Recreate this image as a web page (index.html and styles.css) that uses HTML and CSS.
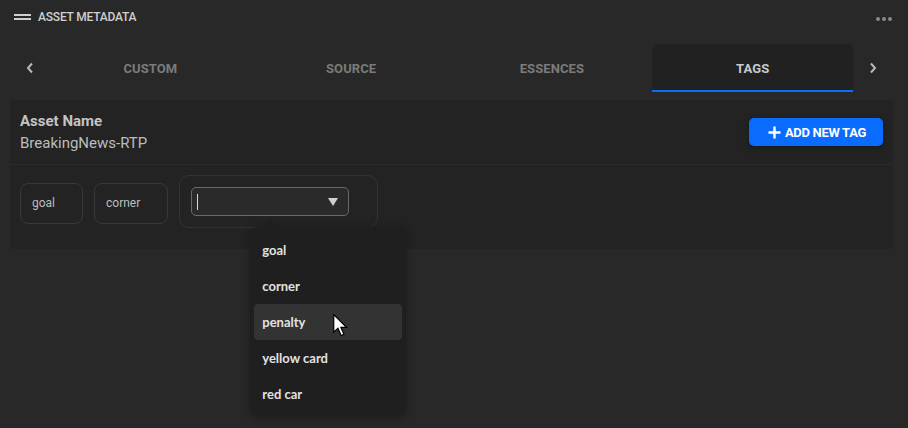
FILE: index.html
```html
<!DOCTYPE html>
<html lang="en">
<head>
    <meta charset="UTF-8">
    <meta name="viewport" content="width=device-width, initial-scale=1.0">
    <title>Asset Metadata</title>
    <link rel="stylesheet" href="styles.css">
</head>
<body>
    <div class="panel-header">
        <div class="panel-title">
            <span class="burger"><i></i><i></i></span>
            <span>Asset Metadata</span>
        </div>
        <div class="dots"><i></i><i></i><i></i></div>
    </div>

    <div class="tabs">
        <button class="tab-arrow">
            <svg width="10" height="12" viewBox="0 0 10 12"><polyline points="7,1.5 3,6 7,10.5" fill="none" stroke="#b8b8b8" stroke-width="2"/></svg>
        </button>
        <div class="tab-list">
            <div class="tab">Custom</div>
            <div class="tab">Source</div>
            <div class="tab">Essences</div>
            <div class="tab active">Tags</div>
        </div>
        <button class="tab-arrow">
            <svg width="10" height="12" viewBox="0 0 10 12"><polyline points="3,1.5 7,6 3,10.5" fill="none" stroke="#b8b8b8" stroke-width="2"/></svg>
        </button>
    </div>

    <div class="card">
        <div class="card-head">
            <div>
                <div class="asset-label">Asset Name</div>
                <div class="asset-value">BreakingNews-RTP</div>
            </div>
            <button class="add-btn">
                <svg width="13" height="13" viewBox="0 0 13 13"><path d="M6.5 0.5v12M0.5 6.5h12" stroke="#fff" stroke-width="2.4"/></svg>
                Add new tag
            </button>
        </div>

        <div class="tag-row">
            <div class="chip">goal</div>
            <div class="chip">corner</div>
            <div class="chip-input">
                <div class="select-box">
                    <span class="caret"></span>
                    <span class="triangle"></span>
                </div>
                <div class="menu">
                    <div class="menu-item">goal</div>
                    <div class="menu-item">corner</div>
                    <div class="menu-item hover">penalty</div>
                    <div class="menu-item">yellow card</div>
                    <div class="menu-item">red car</div>
                </div>
                <svg class="cursor" width="16" height="23" viewBox="0 0 13 19">
                    <path d="M0.5 0.5 L0.5 15 L4 11.8 L6.6 17.8 L8.9 16.8 L6.4 11 L11 11 Z" fill="#fff" stroke="#000" stroke-width="1"/>
                </svg>
            </div>
        </div>
    </div>
</body>
</html>
```

FILE: styles.css
```css
body {
    margin: 0;
    background-color: #282828;
    font-family: Roboto, "Liberation Sans", sans-serif;
    color: #cfcfcf;
    height: 428px;
    overflow: hidden;
}

.panel-header {
    height: 34px;
    padding: 0 16px 0 14px;
    display: flex;
    align-items: center;
    justify-content: space-between;
}

.panel-title {
    display: flex;
    align-items: center;
    gap: 7px;
    font-size: 12px;
    font-weight: 500;
    text-transform: uppercase;
    letter-spacing: -0.2px;
    color: #d0d0d0;
}

.burger {
    display: flex;
    flex-direction: column;
    gap: 2px;
}

.burger i {
    display: block;
    width: 17px;
    height: 2px;
    background: #cfcfcf;
}

.dots {
    display: flex;
    gap: 2px;
    margin-top: 4px;
}

.dots i {
    display: block;
    width: 4px;
    height: 4px;
    border-radius: 50%;
    background: #8a8a8a;
}

.tabs {
    display: flex;
    margin-top: 10px;
    padding: 0 15px 0 10px;
    height: 48px;
}

.tab-arrow {
    width: 40px;
    background: none;
    border: none;
    padding: 0;
    display: flex;
    align-items: center;
    justify-content: center;
}

.tab-list {
    flex: 1;
    display: grid;
    grid-template-columns: repeat(4, 1fr);
}

.tab {
    display: flex;
    align-items: center;
    justify-content: center;
    font-size: 13px;
    font-weight: 700;
    text-transform: uppercase;
    color: #7b7b7b;
    letter-spacing: 0.1px;
    border-radius: 6px 6px 0 0;
}

.tab.active {
    background: #212121;
    color: #c9c9c9;
    box-shadow: inset 0 -2px 0 #0a6cff;
}

.card {
    margin: 8px 15px 0 10px;
    background: #232323;
    border-radius: 4px;
}

.card-head {
    display: flex;
    align-items: center;
    justify-content: space-between;
    padding: 11px 10px 11px 10px;
    border-bottom: 1px solid #2b2b2b;
}

.asset-label {
    font-size: 15px;
    font-weight: 700;
    line-height: 20px;
    color: #c4c4c4;
}

.asset-value {
    font-size: 15px;
    line-height: 20px;
    margin-top: 2px;
    color: #bdbdbd;
}

.add-btn {
    display: flex;
    align-items: center;
    gap: 4px;
    height: 28px;
    width: 134px;
    justify-content: center;
    background: #0a6cff;
    color: #fff;
    border: none;
    border-radius: 5px;
    font-family: Roboto, "Liberation Sans", sans-serif;
    font-size: 13px;
    font-weight: 700;
    text-transform: uppercase;
    letter-spacing: -0.3px;
    box-shadow: 0 2px 6px rgba(0, 0, 0, 0.3);
    padding: 0 0 0 2px;
}

.tag-row {
    display: flex;
    align-items: center;
    gap: 11px;
    padding: 10px 10px 21px;
}

.chip {
    height: 39px;
    padding: 0 27px 0 11px;
    display: flex;
    align-items: center;
    border: 1px solid #383838;
    border-radius: 8px;
    font-size: 12px;
    color: #bdbdbd;
    margin-top: 3px;
}

.chip-input {
    position: relative;
    padding: 11px 28px 11px 11px;
    border: 1px solid #333;
    border-radius: 10px;
}

.select-box {
    height: 27px;
    border: 1px solid #6a6a6a;
    border-radius: 5px;
    background: #2a2a2a;
    display: flex;
    align-items: center;
    justify-content: space-between;
    padding: 0 10px 0 5px;
    width: 141px;
}

.caret {
    width: 1px;
    height: 16px;
    background: #d8d8d8;
}

.triangle {
    width: 0;
    height: 0;
    border-left: 5px solid transparent;
    border-right: 5px solid transparent;
    border-top: 8px solid #cfcfcf;
}

.menu {
    position: absolute;
    left: 70px;
    top: 51px;
    width: 148px;
    padding: 5px 4px 4px;
    background: #1f1f1f;
    border-radius: 7px;
    box-shadow: 0 2px 8px rgba(0, 0, 0, 0.3);
    z-index: 2;
}

.menu::before {
    content: "";
    position: absolute;
    left: 12px;
    top: -8px;
    border-left: 8px solid transparent;
    border-right: 8px solid transparent;
    border-bottom: 8px solid #1f1f1f;
}

.menu-item {
    height: 36px;
    display: flex;
    align-items: center;
    padding-left: 8px;
    border-radius: 4px;
    font-family: Lato, "Noto Sans", sans-serif;
    font-size: 13px;
    font-weight: 700;
    color: #e2e2e2;
}

.menu-item.hover {
    background: #333333;
}

.cursor {
    position: absolute;
    left: 153px;
    top: 138px;
    z-index: 3;
}
```
